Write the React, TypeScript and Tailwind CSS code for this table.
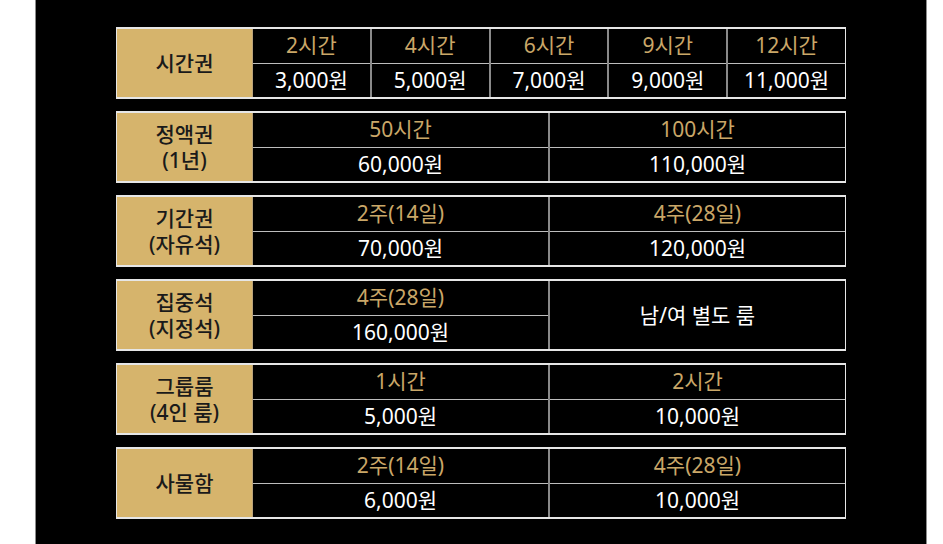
const gold = 'text-[#caa768]';

type Pair = { head: string; price: string };

const Label = ({ lines }: { lines: string[] }) => (
  <div className="w-[136px] shrink-0 bg-[#d6b46c] border-r border-[#b9a27a] flex flex-col items-center justify-center text-[21px] leading-[26px] font-medium text-[#1a1a1a]">
    {lines.map((l) => (
      <span key={l}>{l}</span>
    ))}
  </div>
);

const Col = ({ item, last }: { item: Pair; last?: boolean }) => (
  <div className={`flex-1 flex flex-col ${last ? '' : 'border-r-2 border-[#8a8a8a]'}`}>
    <div className={`flex-1 flex items-center justify-center border-b border-[#bdbdbd] ${gold}`}>{item.head}</div>
    <div className="flex-1 flex items-center justify-center text-white">{item.price}</div>
  </div>
);

const Row = ({ lines, items, extra }: { lines: string[]; items: Pair[]; extra?: string }) => (
  <div className="h-[72px] flex border-y-2 border-x border-[#e6e6e6] text-[21px] leading-none">
    <Label lines={lines} />
    {items.map((it, i) => (
      <Col key={it.head} item={it} last={!extra && i === items.length - 1} />
    ))}
    {extra && <div className="flex-1 flex items-center justify-center text-white">{extra}</div>}
  </div>
);

export default function App() {
  return (
    <div className="w-[943px] h-[544px] bg-white overflow-hidden" style={{ fontFamily: '"Noto Sans", "Noto Sans CJK KR", sans-serif' }}>
      <div className="ml-[35px] w-[892px] h-[544px] bg-black border-x border-[#8c8c8c] pt-[27px]">
        <div className="w-[730px] mx-auto flex flex-col gap-3">
          <Row
            lines={['시간권']}
            items={[
              { head: '2시간', price: '3,000원' },
              { head: '4시간', price: '5,000원' },
              { head: '6시간', price: '7,000원' },
              { head: '9시간', price: '9,000원' },
              { head: '12시간', price: '11,000원' },
            ]}
          />
          <Row
            lines={['정액권', '(1년)']}
            items={[
              { head: '50시간', price: '60,000원' },
              { head: '100시간', price: '110,000원' },
            ]}
          />
          <Row
            lines={['기간권', '(자유석)']}
            items={[
              { head: '2주(14일)', price: '70,000원' },
              { head: '4주(28일)', price: '120,000원' },
            ]}
          />
          <Row lines={['집중석', '(지정석)']} items={[{ head: '4주(28일)', price: '160,000원' }]} extra="남/여 별도 룸" />
          <Row
            lines={['그룹룸', '(4인 룸)']}
            items={[
              { head: '1시간', price: '5,000원' },
              { head: '2시간', price: '10,000원' },
            ]}
          />
          <Row
            lines={['사물함']}
            items={[
              { head: '2주(14일)', price: '6,000원' },
              { head: '4주(28일)', price: '10,000원' },
            ]}
          />
        </div>
      </div>
    </div>
  );
}
